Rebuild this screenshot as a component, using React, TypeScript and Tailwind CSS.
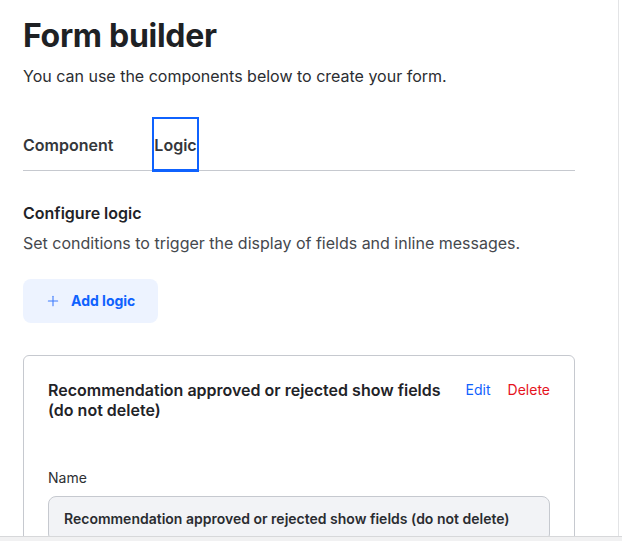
import { Plus } from "lucide-react";

const font = { fontFamily: "Inter, 'Noto Sans', sans-serif" };

const LogicCard = () => {
  return (
    <section className="mt-8 rounded-md border border-[#c6c9cf] p-6">
      <div className="flex items-start gap-6">
        <h3 className="flex-1 text-base leading-5 font-semibold text-[#1f2328]">
          Recommendation approved or rejected show fields (do not delete)
        </h3>
        <div className="flex gap-[17px] text-sm leading-5">
          <button className="text-[#0f62fe]">Edit</button>
          <button className="text-[#e5131d]">Delete</button>
        </div>
      </div>
      <label className="mt-12 block text-sm leading-5 text-[#2d2f33]">Name</label>
      <div className="mt-2 rounded-lg border border-[#c6c9cf] bg-[#f2f3f6] px-[15px] py-3 text-sm leading-5 font-semibold text-[#2a2c30]">
        Recommendation approved or rejected show fields (do not delete)
      </div>
    </section>
  );
};

export default function App() {
  return (
    <div className="flex h-[541px] flex-col overflow-hidden bg-white" style={font}>
      <div className="flex h-[536px] overflow-hidden">
        <main className="w-[619px] shrink-0 border-r border-[#e3e4e6] px-[23px] pt-4">
          <div className="w-[552px]">
            <h1 className="text-[32px] leading-10 font-bold tracking-[-0.3px] text-[#1e2124]">Form builder</h1>
            <p className="mt-2 text-base leading-6 text-[#2b2d31]">
              You can use the components below to create your form.
            </p>

            <div className="mt-[29px] flex gap-[39px] border-b border-[#c6c9cf]">
              <button className="-mb-[2px] border-y-2 border-b-[3px] border-transparent pt-[14px] pb-3 text-base leading-6 font-semibold text-[#35373b]">
                Component
              </button>
              <button className="-mb-[2px] border-2 border-b-[3px] border-[#0f62fe] pt-[14px] pb-3 text-base leading-6 font-semibold text-[#35373b]">
                Logic
              </button>
            </div>

            <h2 className="mt-[30px] text-base leading-6 font-semibold text-[#1f2328]">Configure logic</h2>
            <p className="mt-1.5 text-base leading-6 text-[#45484d]">
              Set conditions to trigger the display of fields and inline messages.
            </p>

            <button className="mt-6 flex h-11 items-center gap-2.5 rounded-lg bg-[#edf3ff] pr-[23px] pl-[22px] text-sm font-bold text-[#0f62fe]">
              <Plus size={16} strokeWidth={1.6} className="text-[#3d7bfd]" />
              Add logic
            </button>

            <LogicCard />
          </div>
        </main>
        <div className="flex-1" />
      </div>
      <div className="h-[5px] border-t border-[#d7d8da] bg-[#f1f1f2]" />
    </div>
  );
}
